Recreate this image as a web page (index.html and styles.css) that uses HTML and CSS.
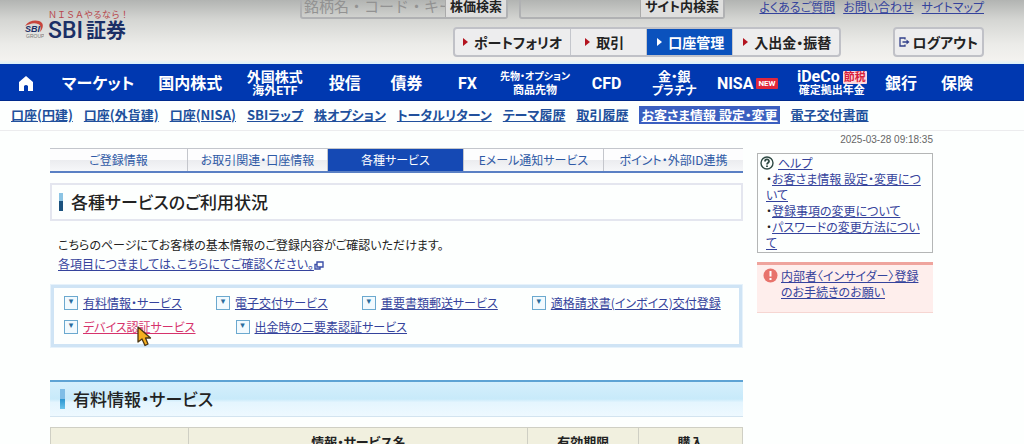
FILE: index.html
```html
<!DOCTYPE html>
<html lang="ja">
<head>
    <meta charset="UTF-8">
    <meta name="viewport" content="width=device-width, initial-scale=1.0">
    <title>SBI証券 - 各種サービス</title>
    <link rel="stylesheet" href="styles.css">
</head>
<body>
    <header class="header">
        <a class="logo" href="#">
            <svg class="logo-mark" width="20" height="19" viewBox="0 0 20 19">
                <path d="M1 6 C5 0 14 -1 18 3 C20 6 18 10 16 12 C17 8 17 5 14 4 C10 2 5 4 1 6 Z" fill="#c8453c"/>
                <text x="1" y="12" class="mark-name">SBI</text>
                <text x="2" y="18" class="mark-group">GROUP</text>
            </svg>
            <span class="logo-text">
                <span class="logo-copy">NISAやるなら!</span>
                <span class="logo-name">SBI<b>証券</b></span>
            </span>
        </a>

        <div class="header-tools">
            <div class="tool-row">
                <form class="search stock-search">
                    <input type="text" placeholder="銘柄名・コード・キーワード" aria-label="銘柄名・コード・キーワード">
                    <button type="submit">株価検索</button>
                </form>
                <form class="search site-search">
                    <input type="text" aria-label="サイト内検索">
                    <button type="submit">サイト内検索</button>
                </form>
                <nav class="help-links">
                    <a href="#">よくあるご質問</a>
                    <a href="#">お問い合わせ</a>
                    <a href="#">サイトマップ</a>
                </nav>
            </div>
            <div class="tool-row">
                <nav class="account-nav">
                    <a href="#">ポートフォリオ</a>
                    <a href="#">取引</a>
                    <a href="#" class="active">口座管理</a>
                    <a href="#">入出金・振替</a>
                </nav>
                <button type="button" class="logout">
                    <svg width="11" height="10" viewBox="0 0 11 10" fill="none" stroke="#33418c" stroke-width="1.3">
                        <path d="M6 2.5 V1 H1 V9 H6 V7.5 M3.5 5 H9"/>
                        <path d="M7.5 2.5 L10.5 5 L7.5 7.5 Z" fill="#33418c" stroke="none"/>
                    </svg>
                    ログアウト
                </button>
            </div>
        </div>
    </header>

    <nav class="global-nav">
        <a href="#" aria-label="ホーム">
            <svg width="16" height="15" viewBox="0 0 16 15"><path d="M8 0 L15 6 V15 H10 V10 Q8 8 6 10 V15 H1 V6 Z" fill="#fff"/></svg>
        </a>
        <a href="#">マーケット</a>
        <a href="#">国内株式</a>
        <a href="#" class="two-line">外国株式<small>海外ETF</small></a>
        <a href="#">投信</a>
        <a href="#">債券</a>
        <a href="#">FX</a>
        <a href="#" class="two-line compact">先物・オプション<small>商品先物</small></a>
        <a href="#">CFD</a>
        <a href="#" class="two-line even">金・銀<small>プラチナ</small></a>
        <a href="#">NISA<em class="tag-new">NEW</em></a>
        <a href="#" class="two-line ideco"><span>iDeCo<em class="tag-tax">節税</em></span><small>確定拠出年金</small></a>
        <a href="#">銀行</a>
        <a href="#">保険</a>
    </nav>

    <nav class="sub-nav">
        <a href="#">口座(円建)</a>
        <a href="#">口座(外貨建)</a>
        <a href="#">口座(NISA)</a>
        <a href="#">SBIラップ</a>
        <a href="#">株オプション</a>
        <a href="#">トータルリターン</a>
        <a href="#">テーマ履歴</a>
        <a href="#">取引履歴</a>
        <a href="#" class="active">お客さま情報 設定・変更</a>
        <a href="#">電子交付書面</a>
    </nav>

    <div class="layout">
        <main class="content">
            <nav class="tabs">
                <a href="#">ご登録情報</a>
                <a href="#">お取引関連・口座情報</a>
                <a href="#" class="active">各種サービス</a>
                <a href="#">Eメール通知サービス</a>
                <a href="#">ポイント・外部ID連携</a>
            </nav>

            <h1 class="page-title">各種サービスのご利用状況</h1>

            <div class="intro">
                <p>こちらのページにてお客様の基本情報のご登録内容がご確認いただけます。</p>
                <p>
                    <a href="#">各項目につきましては、こちらにてご確認ください。<svg width="10" height="9" viewBox="0 0 10 9" fill="#fff" stroke="#3a4fa8" stroke-width="1.4"><path d="M1 3.5 H6 V8 H1 Z"/><path d="M3 1 H9 V6 H3 Z"/></svg></a>
                </p>
            </div>

            <div class="anchor-box">
                <ul>
                    <li><a href="#paid">有料情報・サービス</a></li>
                    <li><a href="#">電子交付サービス</a></li>
                    <li><a href="#">重要書類郵送サービス</a></li>
                    <li><a href="#">適格請求書(インボイス)交付登録</a></li>
                </ul>
                <ul>
                    <li class="hovered">
                        <a href="#">デバイス認証サービス</a>
                        <svg class="cursor" width="15" height="21" viewBox="0 0 15 21"><path d="M1 1 V16 L5 13 L8 19.5 L11 18 L8.5 12 H13.5 Z" fill="#f5ae1e" stroke="#4a3512" stroke-width="1.3" stroke-linejoin="round"/></svg>
                    </li>
                    <li><a href="#">出金時の二要素認証サービス</a></li>
                </ul>
            </div>

            <h2 class="section-title" id="paid">有料情報・サービス</h2>

            <table class="service-table">
                <colgroup>
                    <col class="col-kind">
                    <col class="col-name">
                    <col class="col-limit">
                    <col class="col-buy">
                </colgroup>
                <tr>
                    <th></th>
                    <th>情報・サービス名</th>
                    <th>有効期限</th>
                    <th>購入</th>
                </tr>
            </table>
        </main>

        <aside class="side">
            <time class="timestamp">2025-03-28 09:18:35</time>
            <div class="help-box">
                <p class="help-head">
                    <svg width="14" height="14" viewBox="0 0 14 14" fill="none" stroke="#2f4a44"><circle cx="7" cy="7" r="6" stroke-width="1.4"/><path d="M5 5.5 C5 2.8 9 2.8 9 5.3 C9 6.8 7 6.8 7 8.5 M7 9.6 V11" stroke-width="1.8"/></svg>
                    <a href="#">ヘルプ</a>
                </p>
                <ul>
                    <li><a href="#">お客さま情報 設定・変更について</a></li>
                    <li><a href="#">登録事項の変更について</a></li>
                    <li><a href="#">パスワードの変更方法について</a></li>
                </ul>
            </div>
            <div class="notice">
                <svg width="15" height="15" viewBox="0 0 15 15"><circle cx="7.5" cy="7.5" r="7" fill="#e8736c"/><path d="M7.5 3 V8.5 M7.5 10 V12" stroke="#fff" stroke-width="2"/></svg>
                <a href="#">内部者〈インサイダー〉登録のお手続きのお願い</a>
            </div>
        </aside>
    </div>
</body>
</html>
```
FILE: styles.css
```css
:root {
    --navy: #1b2f66;
    --blue: #0038b0;
    --tab-blue: #1549b4;
    --link: #35439c;
    --line: #c4c6cc;
}

* {
    margin: 0;
    padding: 0;
    box-sizing: border-box;
}

html {
    overflow-y: hidden;
}

body {
    font-family: "Noto Sans CJK JP", "Liberation Sans", sans-serif;
    font-feature-settings: "palt";
    font-size: 12px;
    line-height: 16px;
    color: #222;
    background: #fdfffe;
}

a {
    color: var(--link);
}

ul {
    list-style: none;
}

button,
input {
    font: inherit;
    font-feature-settings: inherit;
}

/* header */
.header {
    display: flex;
    justify-content: space-between;
    height: 64px;
    padding: 0 40px 0 24px;
    background: linear-gradient(180deg, #b2b4b2 0%, #d4d5d2 30%, #ecece9 70%, #f3f2ef 94%, #d8f1fb 100%);
}

.logo {
    display: flex;
    gap: 4px;
    padding-top: 9px;
    text-decoration: none;
}

.logo-mark {
    margin-top: 11px;
}

.mark-name {
    font: italic bold 9px "Liberation Sans", sans-serif;
    fill: var(--navy);
}

.mark-group {
    font: 5px "Liberation Sans", sans-serif;
    fill: #777;
}

.logo-text {
    display: flex;
    flex-direction: column;
}

.logo-copy {
    font-size: 9px;
    line-height: 12px;
    font-feature-settings: normal;
    font-variant-east-asian: full-width;
    color: #b8474c;
}

.logo-name {
    font-family: Roboto, "Noto Sans CJK JP", sans-serif;
    font-size: 23px;
    font-weight: 500;
    line-height: 20px;
    color: var(--navy);
}

.logo-name b {
    margin-left: 3px;
    font-size: 20px;
}

.header-tools {
    display: flex;
    flex-direction: column;
    gap: 8px;
    width: 684px;
    margin-top: -8px;
}

.tool-row {
    display: flex;
    justify-content: space-between;
}

.search {
    display: flex;
    height: 27px;
    border: 2px solid #b0b1b3;
    border-radius: 3px;
}

.search input {
    min-width: 0;
    flex: 1;
    border: 0;
    background: transparent;
    padding-left: 2px;
    font-size: 15px;
    font-feature-settings: normal;
}

.search input::placeholder {
    color: #929292;
}

.search button {
    border: 0;
    border-left: 1px solid #aaa;
    background: #dfdfde;
    padding: 0 4px;
    font-size: 13px;
    font-weight: bold;
    color: #222;
}

.stock-search {
    width: 208px;
}

.site-search {
    width: 206px;
    margin-left: 11px;
    margin-right: auto;
}

.help-links {
    display: flex;
    gap: 8px;
    padding-top: 7px;
}

.account-nav {
    display: flex;
    margin-left: 153px;
    border: 2px solid #c0c1c7;
    border-radius: 4px;
    background: #ededee;
}

.account-nav a {
    display: flex;
    align-items: center;
    gap: 6px;
    min-width: 76px;
    height: 26px;
    padding: 0 8px;
    font-size: 14px;
    font-weight: bold;
    color: #222;
    text-decoration: none;
}

.account-nav a + a {
    padding-left: 14px;
    border-left: 1px solid var(--line);
}

.account-nav a::before {
    content: "";
    border: 4px solid transparent;
    border-left: 5px solid #b3131f;
    border-right: 0;
}

.account-nav .active,
.account-nav .active + a {
    padding-left: 10px;
}

.account-nav .active {
    background: #0b52bd;
    color: #fff;
}

.account-nav .active::before {
    border-left-color: #fff;
}

.logout {
    display: flex;
    align-items: center;
    gap: 2px;
    height: 30px;
    padding: 0 4px;
    border: 2px solid #c0c1c7;
    border-radius: 4px;
    background: #ededee;
    font-size: 14px;
    font-weight: bold;
    color: #222;
}

/* global navigation */
.global-nav {
    display: grid;
    grid-template-columns: 52fr 92fr 92fr 77fr 63fr 60fr 62fr 73fr 70fr 65fr 81fr 88fr 50fr 62fr;
    height: 37px;
    padding: 3px 36px 0 0;
    background: var(--blue);
    border-bottom: 1px solid #002a8c;
}

.global-nav a {
    display: flex;
    align-items: center;
    justify-content: center;
    min-width: 0;
    font-family: Roboto, "Noto Sans CJK JP", sans-serif;
    font-size: 16px;
    font-weight: bold;
    color: #fff;
    white-space: nowrap;
    text-decoration: none;
}

.global-nav .two-line {
    flex-direction: column;
    font-size: 14px;
    line-height: 14px;
}

.global-nav small {
    font-size: 12px;
    line-height: 14px;
}

.global-nav .compact {
    font-size: 10px;
}

.global-nav .compact small {
    font-size: 11px;
}

.global-nav .even {
    font-size: 13px;
}

.global-nav .ideco {
    font-size: 16px;
}

.global-nav .ideco small {
    font-size: 11px;
}

.tag-new,
.tag-tax {
    margin-left: 3px;
    border-radius: 1px;
    font-style: normal;
}

.tag-new {
    padding: 0 2px;
    background: #e0283c;
    font-size: 8px;
    line-height: 11px;
}

.tag-tax {
    padding: 0 1px;
    background: #fbd9df;
    color: #d81e3a;
    font-size: 11px;
    line-height: 12px;
    vertical-align: 1px;
}

/* account sub navigation */
.sub-nav {
    display: flex;
    gap: 11px;
    height: 30px;
    padding: 5px 11px;
    border-bottom: 1px solid #ececee;
    font-size: 13px;
    font-weight: bold;
    line-height: 18px;
    white-space: nowrap;
}

.sub-nav a {
    height: 18px;
    color: #21509c;
}

.sub-nav .active {
    padding: 0 2px;
    background: #3b5fc0;
    color: #fff;
}

/* page body */
.layout {
    display: grid;
    grid-template-columns: minmax(0, 693fr) minmax(0, 176fr);
    gap: 14px;
    padding: 0 91px 0 50px;
}

.content {
    padding-top: 17px;
}

.tabs {
    display: grid;
    grid-template-columns: 137fr 140fr 136fr 140fr 140fr;
    height: 25px;
    border-top: 1px solid #c3c6cc;
    border-bottom: 2px solid #5a80c4;
    background: linear-gradient(180deg, #fdfdfe 50%, #ebecef 50%, #f6f7f9 100%);
}

.tabs a {
    color: #2f5aa6;
    line-height: 22px;
    text-align: center;
    text-decoration: none;
    white-space: nowrap;
}

.tabs a + a {
    border-left: 1px solid var(--line);
}

.tabs .active {
    background: var(--tab-blue);
    color: #fff;
}

.page-title {
    display: flex;
    align-items: center;
    height: 38px;
    margin-top: 10px;
    padding-left: 7px;
    border: 2px solid #e4e6ef;
    font-size: 17px;
    font-weight: 500;
}

.page-title::before,
.section-title::before {
    content: "";
    width: 4px;
    height: 18px;
    margin-right: 8px;
    background: linear-gradient(180deg, #8cc4e4 45%, #1b527e 45%);
}

.intro {
    padding: 14px 8px 0;
    line-height: 19px;
}

.intro svg {
    vertical-align: -1px;
}

.anchor-box {
    margin-top: 11px;
    padding: 3px 10px 5px;
    border: 4px solid #cfe4f5;
    outline: 1px solid #e6f2fb;
    outline-offset: -1px;
}

.anchor-box ul {
    display: flex;
    gap: 34px;
}

.anchor-box ul + ul {
    gap: 40px;
}

.anchor-box li {
    position: relative;
    display: flex;
    align-items: center;
    gap: 5px;
    height: 24px;
    white-space: nowrap;
}

.anchor-box li::before {
    content: "▾";
    width: 12px;
    height: 12px;
    border: 1px solid #6ba9cf;
    background: #f2fafe;
    color: #2a6c9c;
    font: 9px "DejaVu Sans", sans-serif;
    line-height: 9px;
    text-align: center;
}

.anchor-box .hovered a {
    color: #d6336c;
}

.cursor {
    position: absolute;
    left: 73px;
    top: 11px;
}

.section-title {
    display: flex;
    align-items: center;
    height: 37px;
    margin-top: 32px;
    padding-left: 10px;
    border-top: 2px solid #5ea3d4;
    border-bottom: 1px solid #d3e4f0;
    background: linear-gradient(180deg, #d5effc 0%, #c8eafa 50%, #e4f5fe 60%, #eef9ff 100%);
    font-size: 17px;
    font-weight: 500;
}

.section-title::before {
    width: 5px;
    height: 20px;
    background: linear-gradient(180deg, #7fbde6 50%, #2a94d0 50%, #6cc4ec 100%);
}

.service-table {
    width: 100%;
    margin-top: 10px;
    border-collapse: collapse;
    table-layout: fixed;
}

.service-table th {
    height: 28px;
    border: 1px solid #cfcfc4;
    background: #f1f0df;
    font-size: 13px;
    font-weight: bold;
}

.col-kind {
    width: 20%;
}

.col-limit {
    width: 16%;
}

.col-buy {
    width: 15%;
}

/* side column */
.timestamp {
    display: block;
    padding-top: 1px;
    font-family: "Liberation Sans", sans-serif;
    font-size: 10px;
    color: #666;
    text-align: right;
}

.help-box {
    margin-top: 5px;
    padding: 1px 8px;
    border: 1px solid #b4b6b6;
}

.help-head {
    display: flex;
    align-items: center;
    gap: 4px;
    margin-left: -6px;
}

.help-box li::before {
    content: "・";
}

.notice {
    display: flex;
    gap: 3px;
    margin-top: 9px;
    padding: 3px 6px 12px;
    border-top: 3px solid #efa49d;
    border-bottom: 1px solid #f6d6d2;
    background: #feeeec;
}

.notice svg {
    flex: none;
}
```
